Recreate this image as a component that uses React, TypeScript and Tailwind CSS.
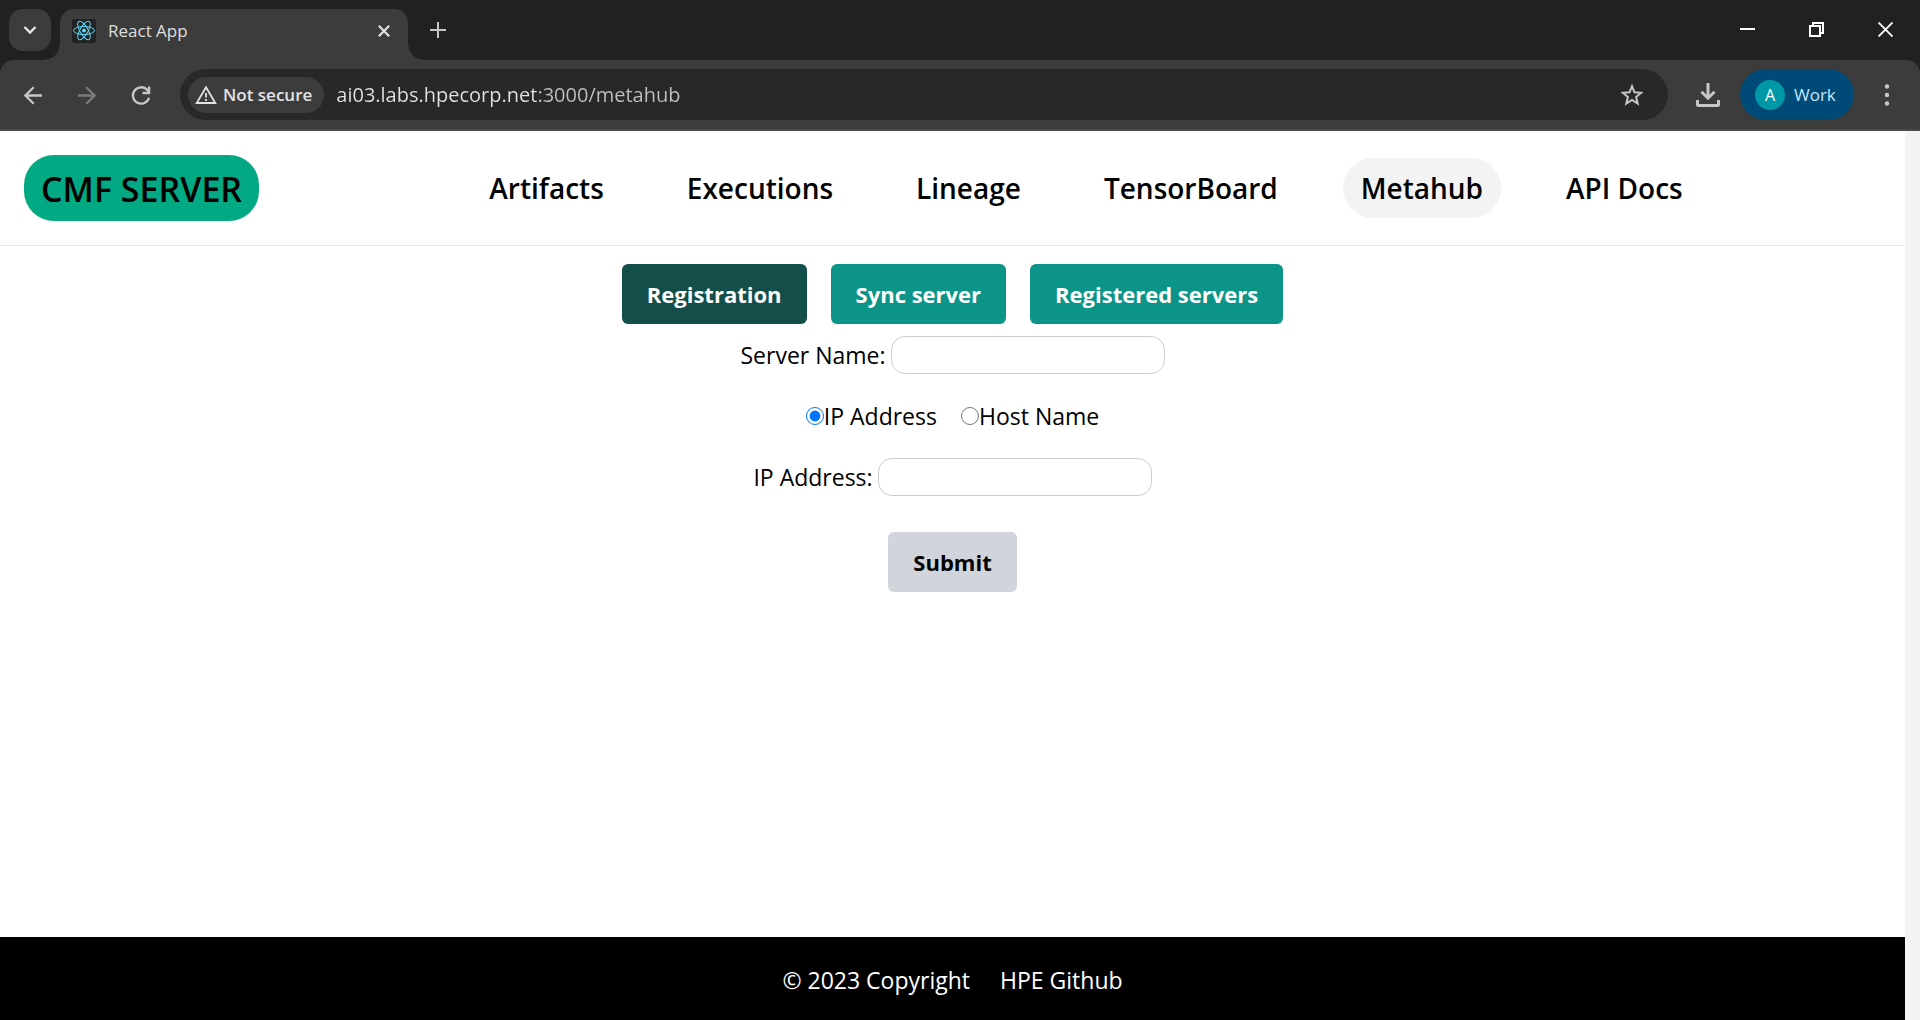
import { useState, type ReactNode } from "react";

const navItems = ["Artifacts", "Executions", "Lineage", "TensorBoard", "Metahub", "API Docs"];
const tabs = ["Registration", "Sync server", "Registered servers"];

function ReactLogo() {
  return (
    <svg viewBox="0 0 24 24" className="h-6 w-6 shrink-0" aria-hidden="true">
      <rect width="24" height="24" rx="2" fill="#222222" />
      <g fill="none" stroke="#61dafb" strokeWidth="1">
        <ellipse cx="12" cy="11.500" rx="10.500" ry="4" />
        <ellipse cx="12" cy="11.500" rx="10.500" ry="4" transform="rotate(60 12 11.500)" />
        <ellipse cx="12" cy="11.500" rx="10.500" ry="4" transform="rotate(120 12 11.500)" />
      </g>
      <circle cx="12" cy="11.500" r="1.900" fill="#61dafb" />
    </svg>
  );
}

function TabStrip() {
  return (
    <div className="flex h-[60px] items-end bg-[#202221]">
      <div className="flex h-[60px] items-start pt-[9px] pl-[9px]">
        <button aria-label="Search tabs" className="flex h-[42px] w-[42px] items-center justify-center rounded-[14px] bg-[#3c3c3c]">
          <svg viewBox="0 0 14 10" className="h-[10px] w-[14px]" fill="none" stroke="#e3e3e3" strokeWidth="2.4">
            <path d="M1.5 2 7 7.5 12.5 2" />
          </svg>
        </button>
      </div>
      <div className="flex items-end">
        <div className="-ml-[6px] h-[15px] w-[15px] bg-[radial-gradient(circle_at_top_left,transparent_14px,#3c3c3c_15px)]" />
        <div className="flex h-[51px] w-[348px] items-center rounded-t-[14px] bg-[#3c3c3c] pr-4 pb-2 pl-3">
          <ReactLogo />
          <span className="ml-3 flex-1 text-[17px] leading-6 text-[#dfdfdf]">React App</span>
          <button aria-label="Close tab" className="flex h-4 w-4 items-center justify-center">
            <svg viewBox="0 0 12 12" className="h-3 w-3" stroke="#e3e3e3" strokeWidth="2.2">
              <path d="m.8.8 10.4 10.4M11.2.8.8 11.2" />
            </svg>
          </button>
        </div>
        <div className="h-[15px] w-[15px] bg-[radial-gradient(circle_at_top_right,transparent_14px,#3c3c3c_15px)]" />
      </div>
      <button aria-label="New tab" className="mb-[22px] ml-[7px]">
        <svg viewBox="0 0 16 16" className="h-4 w-4" stroke="#c7c7c7" strokeWidth="2">
          <path d="M8 0v16M0 8h16" />
        </svg>
      </button>
      <div className="mr-[27px] mb-[23px] ml-auto flex items-center gap-[54px]">
        <button aria-label="Minimize">
          <svg viewBox="0 0 15 15" className="h-[15px] w-[15px]" fill="#fff">
            <path d="M0 6h15v2H0z" />
          </svg>
        </button>
        <button aria-label="Restore">
          <svg viewBox="0 0 15 15" className="h-[15px] w-[15px]" fill="none" stroke="#fff" strokeWidth="2">
            <path d="M1 4h10v10H1zM4 4V1h10v10h-3" />
          </svg>
        </button>
        <button aria-label="Close">
          <svg viewBox="0 0 15 15" className="h-[15px] w-[15px]" stroke="#fff" strokeWidth="1.8">
            <path d="m.5.5 14 14M14.500.5l-14 14" />
          </svg>
        </button>
      </div>
    </div>
  );
}

function ToolButton({ label, children }: { label: string; children: ReactNode }) {
  return (
    <button aria-label={label} className="flex h-6 w-6 shrink-0 items-center justify-center">
      {children}
    </button>
  );
}

function Toolbar() {
  return (
    <div className="bg-[#202221]">
      <div className="flex h-[71px] items-center rounded-t-[14px] border-b-2 border-[#4a4a4a] bg-[#3c3c3c] pl-[21px]">
        <div className="flex gap-[30px]">
          <ToolButton label="Back">
            <svg viewBox="0 0 24 24" className="h-6 w-6" fill="none" stroke="#c7c7c7" strokeWidth="2.300">
              <path d="M21 12.500H4.500M12.700 4.200 4.400 12.500l8.300 8.300" />
            </svg>
          </ToolButton>
          <ToolButton label="Forward">
            <svg viewBox="0 0 24 24" className="h-6 w-6" fill="none" stroke="#7c7c7c" strokeWidth="2.300">
              <path d="M3 12.500h16.500M11.300 4.200l8.300 8.300-8.300 8.300" />
            </svg>
          </ToolButton>
          <ToolButton label="Reload">
            <svg viewBox="0 0 24 24" className="h-6 w-6" fill="none" stroke="#c7c7c7" strokeWidth="2.300">
              <path d="M20 14.700A8.200 8.200 0 1 1 18.300 7.100l1.900 2.200M20.100 3.500V10h-6.500" />
            </svg>
          </ToolButton>
        </div>
        <div className="ml-[27px] flex h-[51px] flex-1 items-center rounded-full bg-[#282828] pr-6 pl-2">
          <button className="flex h-9 items-center gap-[6px] rounded-full bg-[#3c3c3c] pr-3 pl-[7px] text-[17px] font-semibold text-[#e3e3e3]">
            <svg viewBox="0 0 22 20" className="h-5 w-[22px]" fill="none" stroke="#e3e3e3" strokeWidth="1.800">
              <path d="M11 2.200 20.300 18H1.700z" />
              <path d="M11 8v4.500M11 14v2" />
            </svg>
            Not secure
          </button>
          <input
            aria-label="Address"
            defaultValue="ai03.labs.hpecorp.net:3000/metahub"
            className="ml-3 min-w-0 flex-1 bg-[linear-gradient(to_right,#e3e3e3_200px,#c0c0c0_200px)] bg-clip-text text-[20px] leading-8 text-transparent outline-none"
          />
          <ToolButton label="Bookmark this page">
            <svg viewBox="0 0 24 24" className="h-6 w-6" fill="none" stroke="#c7c7c7" strokeWidth="2">
              <path d="m12 3.200 2.500 6.100 6.600.5-5 4.300 1.600 6.400L12 17l-5.700 3.500 1.600-6.400-5-4.300 6.600-.5z" />
            </svg>
          </ToolButton>
        </div>
        <div className="ml-7 flex items-center">
          <ToolButton label="Downloads">
            <svg viewBox="0 0 24 24" className="h-6 w-6" fill="none" stroke="#c7c7c7" strokeWidth="3">
              <path d="M12 0v15M5.500 8.700 12 15.200l6.500-6.500" />
              <path d="M1.500 17v4.500q0 1 1 1h19q1 0 1-1V17" />
            </svg>
          </ToolButton>
          <button className="ml-5 flex h-[51px] w-[114px] items-center gap-[9px] rounded-full bg-[#004a77] pl-[15px] text-[17px] text-[#c2e7ff]">
            <span className="flex h-[30px] w-[30px] items-center justify-center rounded-full bg-[#0097a7] text-[16px] text-white">A</span>
            Work
          </button>
          <button aria-label="Menu" className="mx-[21px] flex h-6 w-6 items-center justify-center">
            <svg viewBox="0 0 24 24" className="h-6 w-6" fill="#c7c7c7">
              <circle cx="12" cy="3.500" r="2.200" />
              <circle cx="12" cy="12" r="2.200" />
              <circle cx="12" cy="20.500" r="2.200" />
            </svg>
          </button>
        </div>
      </div>
    </div>
  );
}

function Field({ id, label }: { id: string; label: string }) {
  return (
    <div className="flex items-center gap-[5px]">
      <label htmlFor={id}>{label}</label>
      <input id={id} type="text" className="h-[38px] w-[274px] rounded-[14px] border border-[#cccccc] px-3 outline-none" />
    </div>
  );
}

export default function App() {
  const [tab, setTab] = useState("Registration");
  const [kind, setKind] = useState("IP Address");
  return (
    <div className="flex min-h-screen flex-col bg-white font-['Open_Sans',sans-serif] text-black">
      <TabStrip />
      <Toolbar />
      <div className="flex flex-1">
        <div className="flex flex-1 flex-col">
          <header className="flex items-center border-b border-[#e5e5e5] px-6 py-6">
            <a href="#home" className="rounded-[30px] bg-[#02a982] px-[17px] pt-[10px] pb-2 text-[34px] leading-[48px] font-semibold">
              CMF SERVER
            </a>
            <nav className="flex flex-1 justify-center gap-[47px] pl-8 text-[28px] leading-9 font-semibold">
              {navItems.map((item) => (
                <a
                  key={item}
                  href={"#" + item}
                  className={item === "Metahub" ? "rounded-[30px] bg-[#f3f3f3] px-[18px] py-3" : "rounded-[30px] px-[18px] py-3"}
                >
                  {item}
                </a>
              ))}
            </nav>
          </header>
          <main className="flex flex-1 flex-col items-center pt-[18px] text-[23px] leading-9">
            <div className="flex gap-6 text-[22px] leading-9">
              {tabs.map((t) => (
                <button
                  key={t}
                  onClick={() => setTab(t)}
                  className={
                    t === tab
                      ? "rounded-md bg-[#134e4a] px-[25px] py-3 font-bold text-white"
                      : "rounded-md bg-[#0d9488] px-[25px] py-3 font-bold text-white"
                  }
                >
                  {t}
                </button>
              ))}
            </div>
            <form className="mt-3 flex flex-col items-center" onSubmit={(e) => e.preventDefault()}>
              <Field id="server-name" label="Server Name:" />
              <div className="my-6 flex gap-6">
                {["IP Address", "Host Name"].map((k) => (
                  <label key={k} className="flex items-center">
                    <input type="radio" name="kind" checked={kind === k} onChange={() => setKind(k)} className="h-[18px] w-[18px]" />
                    {k}
                  </label>
                ))}
              </div>
              <Field id="address" label={kind + ":"} />
              <button className="mt-9 rounded-md bg-[#d1d5db] px-[25px] py-3 text-[22px] leading-9 font-bold">Submit</button>
            </form>
          </main>
          <footer className="flex items-center justify-center gap-[30px] bg-black pt-[25px] pb-[22px] text-[23px] leading-9 text-white">
            <p>© 2023 Copyright</p>
            <a href="https://github.com/HewlettPackard">HPE Github</a>
          </footer>
        </div>
        <div className="w-[15px] bg-[#f3f3f3]" />
      </div>
    </div>
  );
}
